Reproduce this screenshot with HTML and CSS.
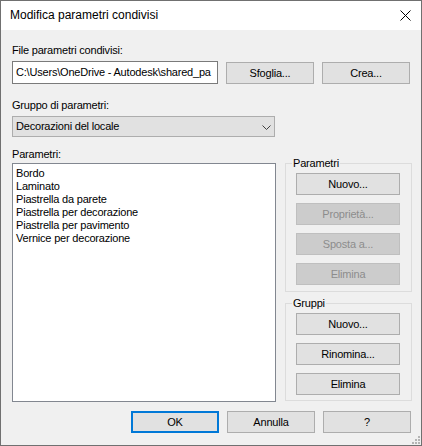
FILE: index.html
```html
<!DOCTYPE html>
<html lang="it">
<head>
<meta charset="utf-8">
<title>Modifica parametri condivisi</title>
<link rel="stylesheet" href="styles.css">
</head>
<body>
<div class="window">
  <div class="titlebar">
    <span class="title">Modifica parametri condivisi</span>
    <svg class="close" width="11" height="11" viewBox="0 0 11 11"><path d="M0.5 0.5 L10.5 10.5 M10.5 0.5 L0.5 10.5" stroke="#000" stroke-width="1" fill="none"/></svg>
  </div>
  <div class="content">
    <div class="label label-file">File parametri condivisi:</div>
    <div class="file-row">
      <div class="textbox">C:\Users\OneDrive - Autodesk\shared_pa</div>
      <div class="btn btn-top">Sfoglia...</div>
      <div class="btn btn-top">Crea...</div>
    </div>
    <div class="label label-group">Gruppo di parametri:</div>
    <div class="combo">
      <span class="combo-text">Decorazioni del locale</span>
      <svg class="chevron" width="9" height="5" viewBox="0 0 9 5"><path d="M0.5 0.5 L4.5 4.5 L8.5 0.5" stroke="#404040" stroke-width="1" fill="none"/></svg>
    </div>
    <div class="label label-params">Parametri:</div>
    <div class="main">
      <div class="listbox">
        <div class="item">Bordo</div>
        <div class="item">Laminato</div>
        <div class="item">Piastrella da parete</div>
        <div class="item">Piastrella per decorazione</div>
        <div class="item">Piastrella per pavimento</div>
        <div class="item">Vernice per decorazione</div>
      </div>
      <div class="side">
        <div class="group group-params">
          <span class="group-title">Parametri</span>
          <div class="btn">Nuovo...</div>
          <div class="btn disabled">Proprietà...</div>
          <div class="btn disabled">Sposta a...</div>
          <div class="btn disabled">Elimina</div>
        </div>
        <div class="group group-groups">
          <span class="group-title">Gruppi</span>
          <div class="btn">Nuovo...</div>
          <div class="btn">Rinomina...</div>
          <div class="btn">Elimina</div>
        </div>
      </div>
    </div>
    <div class="footer">
      <div class="btn btn-foot default">OK</div>
      <div class="btn btn-foot">Annulla</div>
      <div class="btn btn-foot">?</div>
    </div>
  </div>
  <svg class="grip" width="8" height="8" viewBox="0 0 8 8">
    <rect x="6" y="0" width="2" height="2" fill="#b4b4b4"/>
    <rect x="3" y="3" width="2" height="2" fill="#b4b4b4"/>
    <rect x="6" y="3" width="2" height="2" fill="#b4b4b4"/>
    <rect x="0" y="6" width="2" height="2" fill="#b4b4b4"/>
    <rect x="3" y="6" width="2" height="2" fill="#b4b4b4"/>
    <rect x="6" y="6" width="2" height="2" fill="#b4b4b4"/>
  </svg>
</div>
</body>
</html>
```

FILE: styles.css
```css
* { box-sizing: border-box; }

html, body {
  margin: 0;
  padding: 0;
  background: #ffffff;
}

body {
  font-family: "Liberation Sans", Arial, sans-serif;
  font-size: 11px;
  letter-spacing: -0.2px;
  color: #000;
}

.window {
  position: relative;
  width: 422px;
  height: 446px;
  border: 1px solid #707070;
  background: #f0f0f0;
  display: flex;
  flex-direction: column;
}

.titlebar {
  height: 29px;
  flex: none;
  background: #ffffff;
  display: flex;
  align-items: center;
  justify-content: space-between;
  padding: 0 10px 0 9px;
}

.title {
  font-size: 12px;
  letter-spacing: 0;
  line-height: 29px;
}

.close {
  display: block;
}

.content {
  padding: 13px 9px 0 11px;
  display: flex;
  flex-direction: column;
}

.label {
  line-height: 15px;
  height: 15px;
  flex: none;
}

.file-row {
  margin-top: 3px;
  height: 23px;
  flex: none;
  display: grid;
  grid-template-columns: 206px 88px 88px;
  column-gap: 8px;
  align-items: start;
}

.textbox {
  height: 23px;
  background: #fff;
  border: 1px solid #7a7a7a;
  padding: 0 1px 0 3px;
  line-height: 21px;
  white-space: nowrap;
  overflow: hidden;
}

.btn {
  height: 22px;
  flex: none;
  background: #e1e1e1;
  border: 1px solid #adadad;
  line-height: 20px;
  text-align: center;
  white-space: nowrap;
}

.btn-top {
  margin-top: 1px;
}

.btn.disabled {
  background: #cccccc;
  border-color: #bfbfbf;
  color: #8c8c8c;
}

.label-group {
  margin-top: 14px;
}

.combo {
  margin-top: 3px;
  width: 263px;
  height: 21px;
  flex: none;
  background: #e1e1e1;
  border: 1px solid #adadad;
  display: flex;
  align-items: center;
  justify-content: space-between;
  padding: 0 3px 0 3px;
}

.combo-text {
  line-height: 19px;
}

.chevron {
  display: block;
  margin-top: 1px;
}

.label-params {
  margin-top: 10px;
}

.main {
  margin-top: 1px;
  height: 239px;
  flex: none;
  display: grid;
  grid-template-columns: 264px 127px;
  column-gap: 9px;
  align-items: start;
}

.listbox {
  height: 239px;
  background: #fff;
  border: 1px solid #828790;
  padding: 3px 3px;
}

.item {
  line-height: 13px;
  height: 13px;
  white-space: nowrap;
}

.side {
  display: flex;
  flex-direction: column;
}

.group {
  position: relative;
  width: 127px;
  border: 1px solid #dcdcdc;
  padding: 9px 11px 6px 10px;
  display: flex;
  flex-direction: column;
  gap: 8px;
}

.group-title {
  position: absolute;
  top: -8px;
  left: 6px;
  line-height: 14px;
  padding: 0 1px;
  background: #f0f0f0;
}

.group-groups {
  margin-top: 11px;
  padding-bottom: 5px;
}

.footer {
  margin-top: 9px;
  display: flex;
  justify-content: flex-end;
  gap: 8px;
  padding-right: 1px;
}

.btn-foot {
  width: 88px;
}

.btn.default {
  border: 2px solid #0078d7;
  line-height: 18px;
}

.grip {
  position: absolute;
  right: 1px;
  bottom: 1px;
}
```
